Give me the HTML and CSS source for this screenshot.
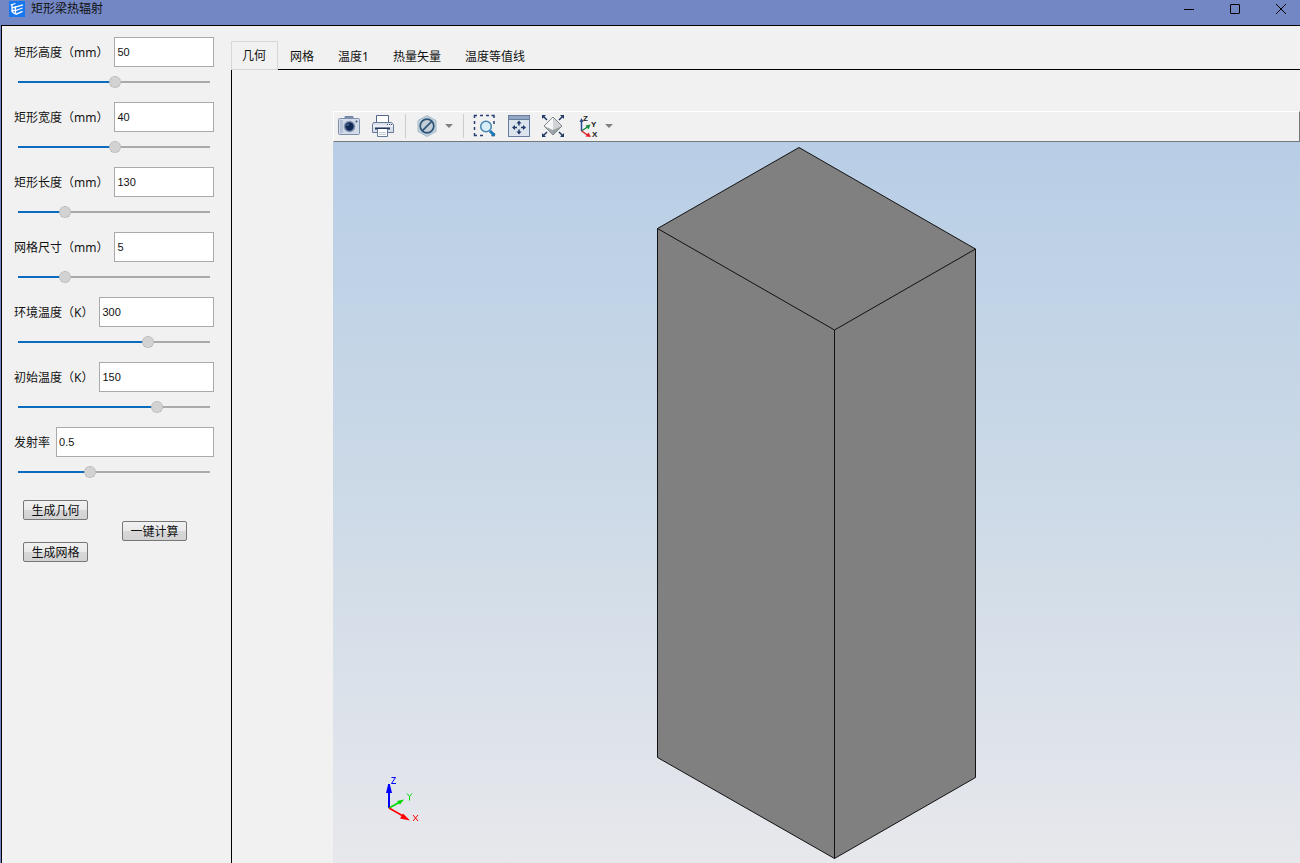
FILE: index.html
```html
<!DOCTYPE html>
<html lang="zh-CN">
<head>
<meta charset="utf-8">
<title>矩形梁热辐射</title>
<link rel="stylesheet" href="styles.css">
</head>
<body>
<div class="window">
  <header class="titlebar">
    <svg class="app-icon" viewBox="0 0 16 16" aria-hidden="true">
      <rect width="16" height="16" fill="#1677ee"/>
      <g fill="none" stroke="#fff" stroke-width="1.300">
        <path d="M1.500 4l5-1.500M3 4v6.500l3 2.500M3 6.500h3M3 9.500h3"/>
        <path d="M6.500 5v8.500"/>
        <path d="M7 5.800l7-2M7 9.500l6.500-2.500M7 13.300l6.500-3"/>
      </g>
    </svg>
    <h1 class="title">矩形梁热辐射</h1>
    <div class="window-buttons">
      <button class="window-button" type="button" aria-label="最小化"><svg viewBox="0 0 12 12"><path d="M1 6.500h10"/></svg></button>
      <button class="window-button" type="button" aria-label="最大化"><svg viewBox="0 0 12 12"><rect x="1.500" y="1.500" width="9" height="9" rx=".5"/></svg></button>
      <button class="window-button" type="button" aria-label="关闭"><svg viewBox="0 0 12 12"><path d="M1 1l10 10M11 1L1 11"/></svg></button>
    </div>
  </header>

  <div class="body">
    <form class="sidebar">
      <div class="param">
        <div class="param-row"><label for="height">矩形高度（mm）</label><input class="value" id="height" type="text" value="50"></div>
        <input class="slider" type="range" aria-label="矩形高度" step="any" value="50.6" style="--fill:50.6%">
      </div>
      <div class="param">
        <div class="param-row"><label for="width">矩形宽度（mm）</label><input class="value" id="width" type="text" value="40"></div>
        <input class="slider" type="range" aria-label="矩形宽度" step="any" value="50.6" style="--fill:50.6%">
      </div>
      <div class="param">
        <div class="param-row"><label for="length">矩形长度（mm）</label><input class="value" id="length" type="text" value="130"></div>
        <input class="slider" type="range" aria-label="矩形长度" step="any" value="22.8" style="--fill:22.8%">
      </div>
      <div class="param">
        <div class="param-row"><label for="mesh">网格尺寸（mm）</label><input class="value" id="mesh" type="text" value="5"></div>
        <input class="slider" type="range" aria-label="网格尺寸" step="any" value="22.8" style="--fill:22.8%">
      </div>
      <div class="param">
        <div class="param-row"><label for="ambient">环境温度（K）</label><input class="value" id="ambient" type="text" value="300"></div>
        <input class="slider" type="range" aria-label="环境温度" step="any" value="68.9" style="--fill:68.9%">
      </div>
      <div class="param">
        <div class="param-row"><label for="initial">初始温度（K）</label><input class="value" id="initial" type="text" value="150"></div>
        <input class="slider" type="range" aria-label="初始温度" step="any" value="73.9" style="--fill:73.9%">
      </div>
      <div class="param">
        <div class="param-row"><label for="emissivity">发射率</label><input class="value" id="emissivity" type="text" value="0.5"></div>
        <input class="slider" type="range" aria-label="发射率" step="any" value="36.7" style="--fill:36.7%">
      </div>
      <div class="actions">
        <div class="action-column">
          <button class="action" type="button">生成几何</button>
          <button class="action" type="button">生成网格</button>
        </div>
        <button class="action" type="button">一键计算</button>
      </div>
    </form>

    <main class="main">
      <div class="tabs" role="tablist">
        <button class="tab tab-active" type="button" role="tab" aria-selected="true">几何</button>
        <button class="tab" type="button" role="tab">网格</button>
        <button class="tab" type="button" role="tab">温度1</button>
        <button class="tab" type="button" role="tab">热量矢量</button>
        <button class="tab" type="button" role="tab">温度等值线</button>
      </div>
      <section class="panel" role="tabpanel">
        <div class="viewer">
          <div class="toolbar">
            <button class="tool" type="button" aria-label="截图">
              <svg viewBox="0 0 24 24">
                <path d="M8 4V2.500h8V4" fill="#7d8fae" stroke="#7385a6"/>
                <rect x="1.500" y="4.500" width="21" height="16" rx="1" fill="#d3dbe8" stroke="#7f90ae"/>
                <rect x="3" y="6" width="3" height="13" fill="#b4c1d6"/>
                <circle cx="12.500" cy="12.500" r="5.800" fill="#7f91b2"/>
                <circle cx="12.500" cy="12.500" r="4.200" fill="#102954"/>
                <path d="M10 12a2.500 2.500 0 0 1 2-2" stroke="#6e8bb9" fill="none"/>
                <circle cx="19.500" cy="7.500" r="1" fill="#324b79"/>
              </svg>
            </button>
            <button class="tool" type="button" aria-label="打印">
              <svg viewBox="1 0 24 24">
                <path d="M6.500 9V1.500h12V9" fill="#fff" stroke="#53658c"/>
                <path d="M3.500 8.500h18l2 2v8h-21v-8z" fill="#d9e0eb" stroke="#667999"/>
                <path d="M3 12h20" stroke="#fff"/>
                <path d="M17 10.500h1M19 10.500h1M21 10.500h1" stroke="#354b75"/>
                <path d="M5 14.500h15" stroke="#23375f" stroke-width="2"/>
                <path d="M7.500 15v7.500h10V15" fill="#fff" stroke="#667999"/>
                <path d="M9 18.500h7M9 20.500h7" stroke="#c6cfdb"/>
              </svg>
            </button>
            <span class="separator"></span>
            <button class="tool tool-menu" type="button" aria-label="显示样式">
              <svg viewBox="0 0 24 24">
                <path d="M11 1.500l9 5v11l-9 5-9-5v-11z" fill="#c2d1dd" stroke="#a7bac8"/>
                <circle cx="11" cy="12" r="6.800" fill="#c3ced8" stroke="#2d5579" stroke-width="1.700"/>
                <path d="M6.500 16.700l9.200-9.300" stroke="#2d5579" stroke-width="1.700"/>
              </svg>
              <span class="caret"></span>
            </button>
            <span class="separator"></span>
            <button class="tool" type="button" aria-label="框选缩放">
              <svg viewBox="1 0 24 24">
                <path d="M1.500 4V1.500H4M7 1.500h3M13 1.500h3M18.500 1.500h2.500V4M21 7v3M1.500 7v3M1.500 13v3M1.500 19v2.500H4M7 21.500h3M21 19v2.500h-2.500" fill="none" stroke="#273f74" stroke-width="1.500"/>
                <circle cx="13" cy="12.500" r="5.300" fill="#d7edf8" stroke="#4886b2" stroke-width="1.500"/>
                <path d="M17 17l4.500 4.500" stroke="#1c78b7" stroke-width="3"/>
              </svg>
            </button>
            <button class="tool" type="button" aria-label="平移">
              <svg viewBox="0 0 24 24">
                <rect x=".5" y="1.500" width="21" height="21" fill="#dbe3ed" stroke="#677e9e"/>
                <rect x="1" y="2" width="20" height="3" fill="#94a7c3"/>
                <path d="M1 5.500h20" stroke="#677e9e"/>
                <path d="M11 6.500l2.500 3h-5zM11 20.500l2.500-3h-5zM4 13.500l3-2.500v5zM18 13.500l-3-2.500v5z" fill="#213965"/>
                <path d="M11 9v2.500M11 15.500V18M7 13.500h2M13 13.500h2" stroke="#213965" stroke-width="1.500"/>
              </svg>
            </button>
            <button class="tool" type="button" aria-label="适应窗口">
              <svg viewBox="0 0 24 24">
                <path d="M0 1h4L0 5zM22 1h-4l4 4zM0 23h4l-4-4zM22 23h-4l4-4z" fill="#213965"/>
                <path d="M1 2l4 4M21 2l-4 4M1 22l4-4M21 22l-4-4" stroke="#213965" stroke-width="1.500"/>
                <path d="M11 3l9 9-9 4-9-4z" fill="#f4f5f6"/>
                <path d="M2 12l9 4 9-4-9 9z" fill="#a2a7ab"/>
                <path d="M11 3l9 9-9 9z" fill="#8f969b" opacity=".35"/>
                <path d="M11 3l9 9-9 9-9-9z" fill="none" stroke="#7d878f"/>
              </svg>
            </button>
            <button class="tool tool-menu" type="button" aria-label="视图方向">
              <svg viewBox="0 0 24 24">
                <path d="M5.500 17V6" stroke="#294b91" stroke-width="1.500"/><path d="M5.500 4l2 4h-4z" fill="#294b91"/>
                <path d="M5.500 17l6-4" stroke="#168b42" stroke-width="1.500"/><path d="M14.500 10.500l-2 5-3-4z" fill="#168b42"/>
                <path d="M5.500 17l6 4" stroke="#e32028" stroke-width="1.500"/><path d="M15 23l-5.500-.5 3-4z" fill="#e32028"/>
                <text class="tool-axis" x="7" y="7">Z</text><text class="tool-axis" x="15" y="13">Y</text><text class="tool-axis" x="16" y="23">X</text>
              </svg>
              <span class="caret"></span>
            </button>
          </div>
          <div class="scene">
            <svg class="beam" viewBox="0 0 320 713" role="img" aria-label="矩形梁几何模型">
              <path d="M142 .5L318.500 102v528.500l-141 81L.5 610.500V81.500z" fill="#808080" stroke="#111"/>
              <path d="M.5 81.500l177 101.500 141-81M177.500 183v528.500" fill="none" stroke="#111"/>
            </svg>
            <svg class="triad" viewBox="0 0 36 52" aria-hidden="true">
              <path d="M4 34V10" stroke="#00f" stroke-width="2"/><path d="M3 11h2l2 8H1z" fill="#00f"/>
              <path d="M4 34l11-6" stroke="#00d800" stroke-width="1.500"/><path d="M19 25.500l-4 5-3-3.500z" fill="#00d800"/>
              <path d="M4 34l14 8" stroke="#f00" stroke-width="1.500"/><path d="M25 46.500l-10-2 3-5z" fill="#f00"/>
              <path d="M6.500 3.500h4l-4 6h4.500" fill="none" stroke="#00f"/>
              <path d="M22 19.500l2.500 3 2.500-3M24.500 22.500v4" fill="none" stroke="#00d800"/>
              <path d="M28 41l5 6M33 41l-5 6" stroke="#f00"/>
            </svg>
          </div>
        </div>
      </section>
    </main>
  </div>
</div>
</body>
</html>
```

FILE: styles.css
```css
* { box-sizing: border-box; }

body {
  margin: 0;
  font: 12px/16px "Noto Sans", "Noto Sans CJK SC", sans-serif;
  color: #111;
  background: #f1f1f1;
}

button, input { font: inherit; color: inherit; }
button { border: 0; padding: 0; background: none; }

.window {
  display: flex;
  flex-direction: column;
  min-height: 100vh;
  border-left: 1px solid #7387c4;
}

.titlebar {
  display: flex;
  align-items: flex-start;
  height: 25px;
  padding: 1px 0 0 8px;
  background: #7387c4;
}

.app-icon { width: 16px; height: 16px; }

.title {
  flex: 1;
  margin: 0 0 0 6px;
  font-size: 12px;
  line-height: 16px;
  font-weight: 400;
}

.window-buttons { display: flex; gap: 8px; }

.window-button {
  display: grid;
  place-items: center;
  width: 38px;
  height: 16px;
}

.window-button svg {
  width: 12px;
  height: 12px;
  fill: none;
  stroke: #000;
}

.body {
  display: flex;
  flex: 1;
  border-top: 1px solid #000;
  border-left: 1px solid #000;
}

.sidebar {
  flex: none;
  width: 229px;
  padding: 11px 17px 0 12px;
}

.param { height: 65px; }

.param-row {
  display: flex;
  align-items: center;
  gap: 6px;
}

.param-row label {
  padding-top: 2px;
  white-space: nowrap;
}

.value {
  flex: 1;
  min-width: 0;
  height: 30px;
  padding: 0 2px;
  border: 1px solid #aaa;
  background: #fff;
  font-family: "Liberation Sans", sans-serif;
  font-size: 11px;
}

.slider {
  appearance: none;
  display: block;
  width: calc(100% - 8px);
  height: 12px;
  margin: 9px 4px 0;
  background: none;
}

.slider::-webkit-slider-runnable-track {
  height: 2px;
  background: linear-gradient(to right, #0b6bbd var(--fill), #aaa var(--fill));
}

.slider::-webkit-slider-thumb {
  appearance: none;
  width: 12px;
  height: 12px;
  margin-top: -5px;
  border: 1px dotted #aaa;
  border-radius: 50%;
  background: #d2d2d2;
}

.actions {
  display: flex;
  align-items: center;
  gap: 34px;
  padding: 8px 0 0 9px;
}

.action-column {
  display: flex;
  flex-direction: column;
  gap: 22px;
}

.action {
  width: 65px;
  height: 20px;
  padding-top: 1px;
  border: 1px solid #777;
  border-radius: 2px;
  background: linear-gradient(#f1f1f1, #e9e9e9 50%, #d8d8d8 50%, #d2d2d2);
  line-height: 16px;
}

.main {
  display: flex;
  flex: 1;
  flex-direction: column;
  min-width: 0;
  padding-top: 15px;
}

.tabs { display: flex; }

.tab {
  height: 28px;
  padding: 3px 12px 0;
}

.tab-active {
  height: 29px;
  margin-bottom: -1px;
  padding: 1px 11px 0 10px;
  border: 1px solid #d6d6d6;
  background: #f1f1f1;
  z-index: 1;
}

.panel {
  display: flex;
  flex: 1;
  padding: 41px 0 0 101px;
  border-top: 1px solid #000;
  border-left: 1px solid #000;
}

.viewer {
  display: flex;
  flex: 1;
  flex-direction: column;
  min-width: 0;
}

.toolbar {
  display: flex;
  align-items: center;
  gap: 10px;
  height: 31px;
  padding: 0 0 1px 3px;
  border: 1px solid;
  border-color: #fff #777 #777 #fff;
}

.tool {
  display: flex;
  align-items: center;
  gap: 5px;
}

.tool svg {
  display: block;
  width: 24px;
  height: 24px;
  overflow: visible;
}

.tool-axis {
  font: 700 8px "Liberation Sans", sans-serif;
  fill: #222;
}

.separator {
  width: 1px;
  height: 24px;
  background: #ccc;
}

.caret {
  border: 4px solid transparent;
  border-top-color: #808080;
  border-bottom: 0;
}

.scene {
  position: relative;
  display: flex;
  flex: 1;
  justify-content: center;
  align-items: flex-start;
  padding-top: 5px;
  background: linear-gradient(#b8cee6, #cddae7 50%, #e7e8ec);
}

.beam { width: 320px; height: 713px; }

.triad {
  position: absolute;
  left: 52px;
  bottom: 37px;
  width: 36px;
  height: 52px;
}
```
